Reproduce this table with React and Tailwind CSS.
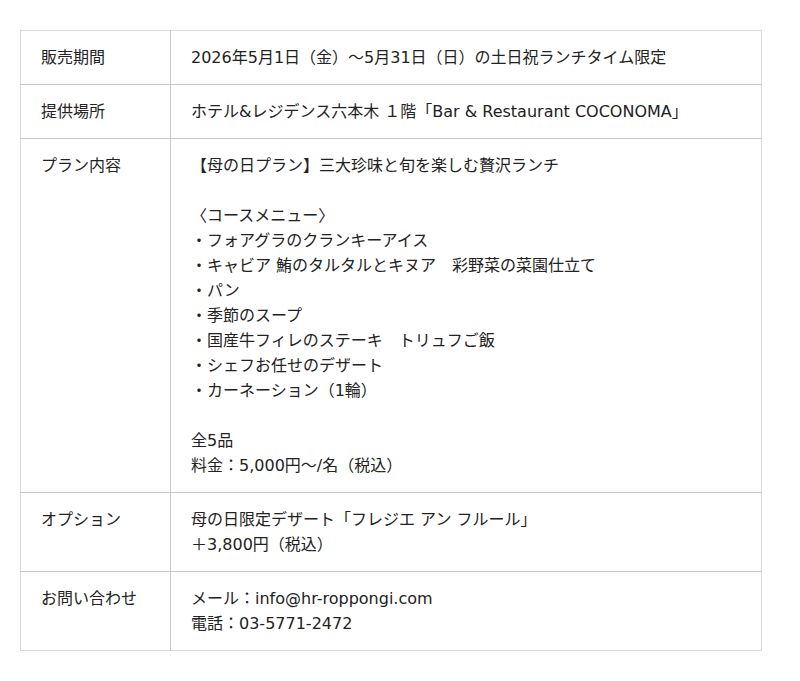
import React from "react";

const rows = [
  { label: "販売期間", lines: ["2026年5月1日（金）〜5月31日（日）の土日祝ランチタイム限定"] },
  { label: "提供場所", lines: ["ホテル&レジデンス六本木 １階「Bar & Restaurant COCONOMA」"] },
  {
    label: "プラン内容",
    lines: [
      "【母の日プラン】三大珍味と旬を楽しむ贅沢ランチ",
      "",
      "〈コースメニュー〉",
      "・フォアグラのクランキーアイス",
      "・キャビア 鮪のタルタルとキヌア　彩野菜の菜園仕立て",
      "・パン",
      "・季節のスープ",
      "・国産牛フィレのステーキ　トリュフご飯",
      "・シェフお任せのデザート",
      "・カーネーション（1輪）",
      "",
      "全5品",
      "料金：5,000円〜/名（税込）",
    ],
  },
  { label: "オプション", lines: ["母の日限定デザート「フレジエ アン フルール」", "＋3,800円（税込）"] },
  { label: "お問い合わせ", lines: ["メール：info@hr-roppongi.com", "電話：03-5771-2472"] },
];

export default function App() {
  return (
    <div
      className="min-h-screen bg-white pt-[30px] pl-[20px] text-[#222] text-[16px] leading-[25px]"
      style={{ fontFamily: '"DejaVu Sans", "Noto Sans CJK JP", sans-serif' }}
    >
      <table className="w-[742px] border-collapse border border-[#d9d9d9] table-fixed">
        <colgroup>
          <col className="w-[150px]" />
          <col />
        </colgroup>
        <tbody>
          {rows.map((row, i) => (
            <tr key={i} className="border-t border-[#c8c8c8] first:border-t-[#d9d9d9]">
              <td className="align-top px-[20px] py-[14px] border-r border-[#c8c8c8]">{row.label}</td>
              <td className="align-top px-[20px] py-[14px]">
                {row.lines.map((line, j) => (
                  <div key={j} className="h-[25px] whitespace-pre">
                    {line}
                  </div>
                ))}
              </td>
            </tr>
          ))}
        </tbody>
      </table>
    </div>
  );
}
